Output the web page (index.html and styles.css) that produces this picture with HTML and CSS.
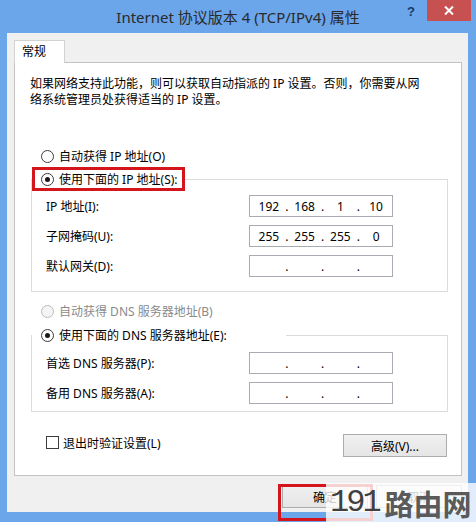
FILE: index.html
```html
<!DOCTYPE html>
<html lang="zh-CN">

<head>
    <meta charset="UTF-8">
    <meta name="viewport" content="width=device-width, initial-scale=1.0">
    <title>Internet 协议版本 4 (TCP/IPv4) 属性</title>
    <link rel="stylesheet" href="styles.css">
</head>

<body>
    <div class="window">
        <!-- Title bar -->
        <div class="titlebar">
            <div></div>
            <div class="title">Internet 协议版本 4 (TCP/IPv4) 属性</div>
            <div class="caption">
                <span class="help">?</span>
                <span class="close">
                    <svg width="10" height="9" viewBox="0 0 10 9">
                        <path d="M1 0.5 L9 8.5 M9 0.5 L1 8.5" stroke="#fff" stroke-width="2" fill="none" />
                    </svg>
                </span>
            </div>
        </div>

        <div class="dialog">
            <div class="tabs">
                <div class="tab">常规</div>
            </div>

            <div class="panel">
                <p class="desc">如果网络支持此功能，则可以获取自动指派的 IP 设置。否则，你需要从网<br>络系统管理员处获得适当的 IP 设置。</p>

                <div class="option opt-ip-auto"><span class="radio"></span>自动获得 IP 地址(O)</div>

                <fieldset class="group group-ip">
                    <legend class="legend marked"><span class="radio checked"></span>使用下面的 IP 地址(S):</legend>
                    <div class="fields">
                        <span class="field-label">IP 地址(I):</span>
                        <div class="ip">
                            <span class="octet">192</span><span class="dot">.</span><span class="octet">168</span><span class="dot">.</span><span class="octet">1</span><span class="dot">.</span><span class="octet">10</span>
                        </div>
                        <span class="field-label">子网掩码(U):</span>
                        <div class="ip">
                            <span class="octet">255</span><span class="dot">.</span><span class="octet">255</span><span class="dot">.</span><span class="octet">255</span><span class="dot">.</span><span class="octet">0</span>
                        </div>
                        <span class="field-label">默认网关(D):</span>
                        <div class="ip">
                            <span class="octet"></span><span class="dot">.</span><span class="octet"></span><span class="dot">.</span><span class="octet"></span><span class="dot">.</span><span class="octet"></span>
                        </div>
                    </div>
                </fieldset>

                <div class="option opt-dns-auto disabled"><span class="radio"></span>自动获得 DNS 服务器地址(B)</div>

                <fieldset class="group group-dns">
                    <legend class="legend"><span class="radio checked"></span>使用下面的 DNS 服务器地址(E):</legend>
                    <div class="fields">
                        <span class="field-label">首选 DNS 服务器(P):</span>
                        <div class="ip">
                            <span class="octet"></span><span class="dot">.</span><span class="octet"></span><span class="dot">.</span><span class="octet"></span><span class="dot">.</span><span class="octet"></span>
                        </div>
                        <span class="field-label">备用 DNS 服务器(A):</span>
                        <div class="ip">
                            <span class="octet"></span><span class="dot">.</span><span class="octet"></span><span class="dot">.</span><span class="octet"></span><span class="dot">.</span><span class="octet"></span>
                        </div>
                    </div>
                </fieldset>

                <div class="bottom-row">
                    <label class="check"><span class="checkbox"></span>退出时验证设置(L)</label>
                    <button class="button advanced">高级(V)...</button>
                </div>
            </div>

            <div class="footer">
                <button class="button">确定</button>
                <button class="button">取消</button>
                <!-- red annotation around OK -->
                <div class="mark-ok"></div>
            </div>
        </div>

        <!-- site watermark -->
        <div class="watermark"><span class="wm-num">191</span><span class="wm-cn">路由网</span></div>
    </div>
</body>

</html>
```

FILE: styles.css
```css
body {
    margin: 0;
    padding: 0;
    font-family: "Noto Sans", "Noto Sans CJK SC", sans-serif;
    font-size: 12px;
    color: #000000;
}

.window {
    width: 476px;
    height: 522px;
    background: #6ba5ea;
    display: flex;
    flex-direction: column;
    position: relative;
    overflow: hidden;
}

/* Title bar */
.titlebar {
    height: 33px;
    flex: none;
    display: grid;
    grid-template-columns: 1fr auto 1fr;
}

.title {
    font-size: 15px;
    line-height: 34px;
    color: #2a2a2a;
    white-space: nowrap;
}

.caption {
    justify-self: end;
    display: flex;
    align-items: flex-start;
    padding-right: 5px;
}

.help {
    font-family: "Liberation Sans", sans-serif;
    font-weight: bold;
    font-size: 13px;
    color: #1c3a60;
    margin: 4px 12px 0 0;
}

.close {
    width: 44px;
    height: 21px;
    background: #c75050;
    display: flex;
    justify-content: center;
    align-items: center;
}

/* Dialog body */
.dialog {
    flex: 1;
    margin: 0 8px 10px 7px;
    padding: 7px 6px 0 7px;
    background: #f0f0f0;
}

.tabs {
    display: flex;
}

.tab {
    width: 51px;
    height: 23px;
    box-sizing: border-box;
    border: 1px solid #d2d2d2;
    border-bottom: none;
    background: #ffffff;
    padding-left: 7px;
    line-height: 22px;
    margin-bottom: -1px;
    position: relative;
}

.panel {
    background: #ffffff;
    border: 1px solid #c2c2c2;
    padding: 13px 13px 18px 16px;
}

.desc {
    margin: 0 0 0 -1px;
    line-height: 16px;
}

.option {
    display: flex;
    align-items: center;
    gap: 5px;
    height: 20px;
    margin-left: 10px;
}

.opt-ip-auto {
    margin-top: 38px;
    margin-bottom: 1px;
}

.opt-dns-auto {
    margin-top: 9px;
    margin-bottom: 2px;
}

.disabled {
    color: #8a8a8a;
}

.radio {
    width: 13px;
    height: 13px;
    box-sizing: border-box;
    border: 1px solid #3c3c3c;
    border-radius: 50%;
    background: #ffffff;
    display: flex;
    justify-content: center;
    align-items: center;
    flex: none;
}

.radio.checked::after {
    content: "";
    width: 5px;
    height: 5px;
    border-radius: 50%;
    background: #1a1a1a;
}

.disabled .radio {
    border-color: #bcbcbc;
    background: #f4f4f4;
}

/* Group boxes */
.group {
    margin: 0;
    padding: 0;
    border: 1px solid #dcdcdc;
    min-width: 0;
}

.legend {
    display: flex;
    align-items: center;
    gap: 5px;
    height: 24px;
    box-sizing: border-box;
    border: 3px solid transparent;
    padding: 0 4px 0 6px;
}

.legend.marked {
    border-color: #d4151c;
}

.group-dns .legend {
    padding-right: 56px;
}

.fields {
    display: grid;
    grid-template-columns: 203px 144px;
    row-gap: 8px;
    align-items: center;
    padding: 4px 0 14px 14px;
}

.group-dns .fields {
    padding-top: 5px;
    padding-bottom: 7px;
}

.ip {
    height: 22px;
    box-sizing: border-box;
    border: 1px solid #a9abb2;
    background: #ffffff;
    display: flex;
    align-items: center;
    padding-left: 3px;
}

.octet {
    flex: 1;
    text-align: center;
}

.dot {
    width: 4px;
    text-align: center;
}

/* Bottom row */
.bottom-row {
    display: flex;
    justify-content: space-between;
    align-items: flex-start;
    margin-top: 22px;
    padding: 0 1px 0 15px;
}

.check {
    display: flex;
    align-items: center;
    gap: 4px;
    height: 17px;
}

.checkbox {
    width: 13px;
    height: 13px;
    box-sizing: border-box;
    border: 1px solid #3c3c3c;
    background: #ffffff;
}

.button {
    font-family: inherit;
    font-size: 12px;
    color: #000000;
    height: 23px;
    width: 86px;
    padding: 0;
    border: 1px solid #acacac;
    background: linear-gradient(#f0f0f0, #e5e5e5);
}

.advanced {
    width: 104px;
}

.footer {
    position: relative;
    display: flex;
    justify-content: flex-end;
    gap: 8px;
    margin-top: 9px;
}

.mark-ok {
    position: absolute;
    left: 264px;
    top: -1px;
    width: 95px;
    height: 37px;
    box-sizing: border-box;
    border: 3px solid #d4151c;
}

/* Watermark */
.watermark {
    position: absolute;
    left: 326px;
    top: 483px;
    right: 0;
    bottom: 0;
    background: rgba(255, 255, 255, 0.8);
    display: flex;
    align-items: center;
    padding-left: 4px;
    white-space: nowrap;
}

.wm-num {
    font-family: "Liberation Mono", monospace;
    font-size: 32px;
    color: #404040;
    letter-spacing: -3px;
}

.wm-cn {
    font-family: "Noto Sans CJK SC", sans-serif;
    font-weight: bold;
    font-size: 29px;
    color: #5a5a5a;
    margin-left: 6px;
}
```
